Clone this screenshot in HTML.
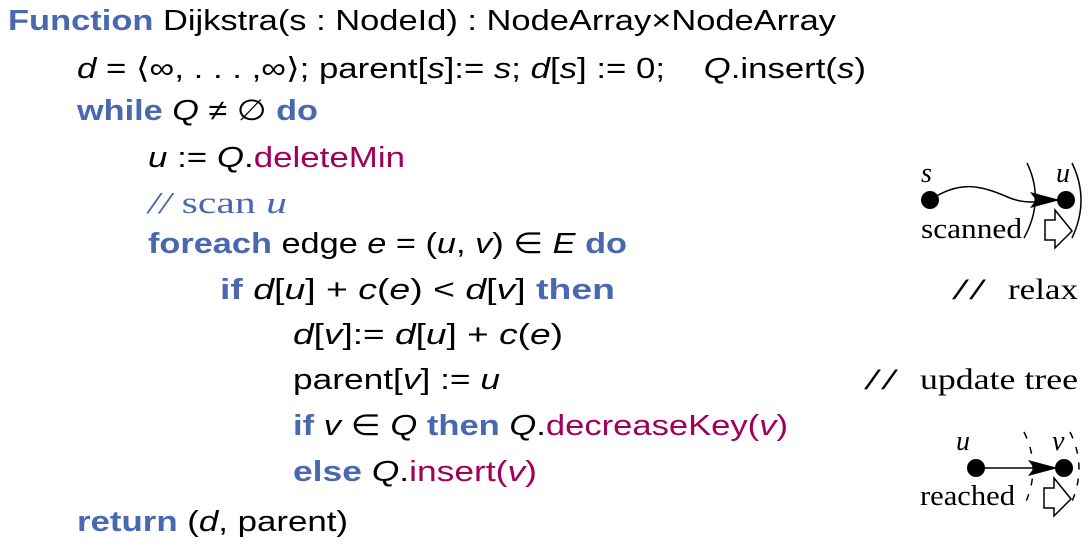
<!DOCTYPE html>
<html><head><meta charset="utf-8"><style>
body{margin:0;width:1088px;height:547px;background:#fff;overflow:hidden;position:relative}
svg{position:absolute;left:0;top:0}
.t{font-family:"Liberation Sans",sans-serif;font-size:29px;fill:#000}
.k{fill:#4a68b0;font-weight:bold}
.p{fill:#a0005a}
.i{font-style:italic}
.sr{font-family:"Liberation Serif",serif}
</style></head><body>
<svg width="1088" height="547" xmlns="http://www.w3.org/2000/svg">
<g class="t">
<text x="8" y="30" textLength="828" lengthAdjust="spacingAndGlyphs"><tspan class="k">Function</tspan> Dijkstra(s : NodeId) : NodeArray×NodeArray</text>
<text x="77" y="78" textLength="789" lengthAdjust="spacingAndGlyphs"><tspan class="i">d</tspan> = ⟨∞, . . . ,∞⟩; parent[<tspan class="i">s</tspan>]:= <tspan class="i">s</tspan>; <tspan class="i">d</tspan>[<tspan class="i">s</tspan>] := 0;&#160;&#160;&#160;&#160;<tspan class="i">Q</tspan>.insert(<tspan class="i">s</tspan>)</text>
<text x="77" y="120" textLength="241" lengthAdjust="spacingAndGlyphs"><tspan class="k">while</tspan> <tspan class="i">Q</tspan> ≠ ∅ <tspan class="k">do</tspan></text>
<text x="148" y="167" textLength="257" lengthAdjust="spacingAndGlyphs"><tspan class="i">u</tspan> := <tspan class="i">Q</tspan>.<tspan class="p">deleteMin</tspan></text>
<text x="148" y="213" textLength="139" lengthAdjust="spacingAndGlyphs" class="sr" style="fill:#4a68b0;font-size:31px"><tspan class="i">//</tspan> scan <tspan class="i">u</tspan></text>
<text x="148" y="253" textLength="479" lengthAdjust="spacingAndGlyphs"><tspan class="k">foreach</tspan> edge <tspan class="i">e</tspan> = (<tspan class="i">u</tspan>, <tspan class="i">v</tspan>) ∈ <tspan class="i">E</tspan> <tspan class="k">do</tspan></text>
<text x="220" y="299" textLength="395" lengthAdjust="spacingAndGlyphs"><tspan class="k">if</tspan> <tspan class="i">d</tspan>[<tspan class="i">u</tspan>] + <tspan class="i">c</tspan>(<tspan class="i">e</tspan>) &lt; <tspan class="i">d</tspan>[<tspan class="i">v</tspan>] <tspan class="k">then</tspan></text>
<text x="293" y="344" textLength="270" lengthAdjust="spacingAndGlyphs"><tspan class="i">d</tspan>[<tspan class="i">v</tspan>]:= <tspan class="i">d</tspan>[<tspan class="i">u</tspan>] + <tspan class="i">c</tspan>(<tspan class="i">e</tspan>)</text>
<text x="293" y="389" textLength="207" lengthAdjust="spacingAndGlyphs">parent[<tspan class="i">v</tspan>] := <tspan class="i">u</tspan></text>
<text x="293" y="435" textLength="495" lengthAdjust="spacingAndGlyphs"><tspan class="k">if</tspan> <tspan class="i">v</tspan> ∈ <tspan class="i">Q</tspan> <tspan class="k">then</tspan> <tspan class="i">Q</tspan>.<tspan class="p">decreaseKey(<tspan class="i">v</tspan>)</tspan></text>
<text x="293" y="481" textLength="244" lengthAdjust="spacingAndGlyphs"><tspan class="k">else</tspan> <tspan class="i">Q</tspan>.<tspan class="p">insert(<tspan class="i">v</tspan>)</tspan></text>
<text x="77" y="531" textLength="271" lengthAdjust="spacingAndGlyphs"><tspan class="k">return</tspan> (<tspan class="i">d</tspan>, parent)</text>
</g>
<g font-family="Liberation Serif" font-size="30">
<text x="952" y="299" textLength="34" lengthAdjust="spacingAndGlyphs">//</text>
<text x="1008" y="299" textLength="70" lengthAdjust="spacingAndGlyphs">relax</text>
<text x="864" y="389" textLength="34" lengthAdjust="spacingAndGlyphs">//</text>
<text x="920" y="389" textLength="158" lengthAdjust="spacingAndGlyphs">update tree</text>
</g>
<g font-family="Liberation Serif" font-size="28">
<text x="921" y="182" font-style="italic">s</text>
<text x="1056" y="182" font-style="italic">u</text>
<circle cx="930" cy="200" r="9"/>
<circle cx="1066" cy="200" r="9"/>
<path d="M930 200 C960 180 980 185 1010 198 C1025 204 1040 202 1058 200" fill="none" stroke="#000" stroke-width="1.5"/>
<path d="M1060 200 L1030 192 L1036 200 L1030 208 Z"/>
<path d="M1027 163 Q1045 200 1024 238" fill="none" stroke="#000" stroke-width="1.5"/>
<path d="M1072 163 Q1090 200 1072 238" fill="none" stroke="#000" stroke-width="1.5"/>
<text x="921" y="238" textLength="101" lengthAdjust="spacingAndGlyphs">scanned</text>
<path d="M1045 220 L1055 220 L1055 210 L1072 231 L1055 248 L1055 240 L1045 240 Z" fill="#fff" stroke="#000" stroke-width="1.5"/>
<text x="956" y="450" font-style="italic">u</text>
<text x="1052" y="450" font-style="italic">v</text>
<circle cx="976" cy="468" r="9"/>
<circle cx="1064" cy="468" r="9"/>
<line x1="976" y1="468" x2="1040" y2="468" stroke="#000" stroke-width="1.5"/>
<path d="M1058 468 L1028 460 L1034 468 L1028 476 Z"/>
<path d="M1024 432 Q1042 468 1024 506" fill="none" stroke="#000" stroke-width="1.5" stroke-dasharray="7 9"/>
<path d="M1070 432 Q1088 468 1070 506" fill="none" stroke="#000" stroke-width="1.5" stroke-dasharray="7 9"/>
<text x="920" y="505" textLength="95" lengthAdjust="spacingAndGlyphs">reached</text>
<path d="M1044 488 L1054 488 L1054 478 L1071 499 L1054 516 L1054 508 L1044 508 Z" fill="#fff" stroke="#000" stroke-width="1.5"/>
</g>
</svg>
</body></html>
